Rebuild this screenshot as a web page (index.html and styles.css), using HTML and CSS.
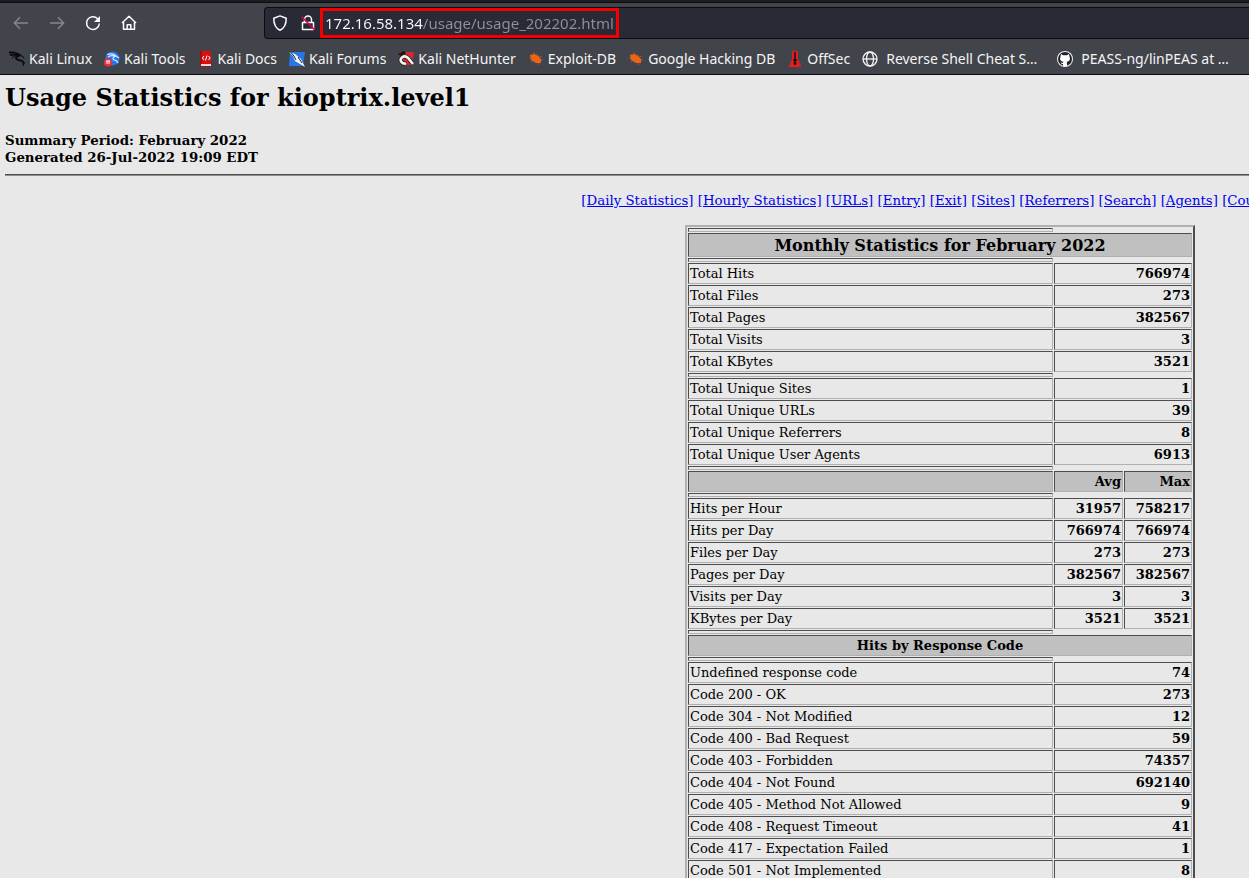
FILE: index.html
```html
<!DOCTYPE html>
<html lang="en">
<head>
<meta charset="utf-8">
<title>Usage Statistics for kioptrix.level1 - February 2022</title>
<link rel="stylesheet" href="styles.css">
</head>
<body>
<header class="browser">
  <div class="tabstrip"></div>
  <div class="toolbar">
    <nav class="controls" aria-label="Navigation">
      <button class="tool" aria-label="Back" disabled><svg width="16" height="16" viewBox="0 0 16 16"><path d="M15 8H1.5M7 2.2L1.3 8L7 13.8"/></svg></button>
      <button class="tool" aria-label="Forward" disabled><svg width="16" height="16" viewBox="0 0 16 16"><path d="M1 8h13.5M9 2.2L14.7 8L9 13.8"/></svg></button>
      <button class="tool" aria-label="Reload"><svg width="16" height="16" viewBox="0 0 16 16"><path d="M14.3 8.5A6.4 6.4 0 1 1 12.6 3.7"/><path class="solid" d="M15 1v6H9z"/></svg></button>
      <button class="tool" aria-label="Home"><svg width="16" height="16" viewBox="0 0 16 16"><path d="M1 8L8 1.2L15 8M2.5 7v7.2h11V7M6.2 14v-4.2h3.6V14"/></svg></button>
    </nav>
    <form class="urlbar">
      <svg class="shield" width="16" height="16" viewBox="0 0 16 16"><path d="M8 .9L14.2 3.2C14.3 8.5 13.2 12.7 8 15.2C2.8 12.7 1.7 8.5 1.8 3.2Z"/></svg>
      <svg class="lock" width="16" height="16" viewBox="0 0 16 16"><path d="M4.5 7V4.500a3.500 3.500 0 0 1 7 0V7M2.500 7.500h11v7h-11z"/><path class="strike" d="M1.500 1.500L14.800 15"/></svg>
      <input class="address" type="text" aria-label="Address" value="172.16.58.134/usage/usage_202202.html">
    </form>
  </div>
  <nav class="bookmarks" aria-label="Bookmarks">
    <a class="bookmark" href="#"><svg width="16" height="16" viewBox="0 0 16 16" fill="none" stroke="#08090b"><path stroke-width="1.8" d="M0 1.5Q6 .8 9 3L11.5 4M1 4Q7 3 9.5 5Q6 6 7.5 8Q9 9.5 12 9.5Q15 10.5 14.5 12.5"/><path d="M10 4l4 1.5l1 2M3 7Q6 4 9 5M14 12l.5 3M12.5 10.5L16 12"/></svg>Kali Linux</a>
    <a class="bookmark" href="#"><svg width="16" height="16" viewBox="0 0 16 16"><circle cx="8.5" cy="7.5" r="7" fill="#2777f3"/><path d="M3 3.5Q9 1.500 12 5L15 7M4 6Q8 3.500 11 5.500Q7.500 7 10 9Q13 9 14 12" fill="none" stroke="#d9ebff" stroke-width="1.2"/><circle cx="4" cy="11.500" r="4" fill="#ed3030"/><path d="M2 10h4M3 10v3M5 10v3" stroke="#fff" fill="none"/></svg>Kali Tools</a>
    <a class="bookmark" href="#"><svg width="16" height="16" viewBox="0 0 16 16"><path d="M2 0h11v13H2z" fill="#d8100e"/><path d="M2 0h2v15H2z" fill="#a80c0c"/><path d="M3 13h10v2H3z" fill="#ddd"/><path d="M2 15h11v1H2z" fill="#b50c0c"/><path d="M6 5L4.300 7L6 9M10.500 5L12.200 7L10.500 9M9 4.500L7.500 9.500" fill="none" stroke="#fff"/></svg>Kali Docs</a>
    <a class="bookmark" href="#"><svg width="16" height="16" viewBox="0 0 16 16"><path d="M1 1h15l-2 14H0z" fill="#2777e8"/><path d="M0 1L6 3L12 8L15 14L16 16L11 13L6 10L4 5Z" fill="#f5f5f5"/><path d="M1 .5L5 5L7 9M9 6L13 12" fill="none" stroke="#20242b"/></svg>Kali Forums</a>
    <a class="bookmark" href="#"><svg width="16" height="16" viewBox="0 0 16 16"><path d="M2 1h14l-2 13H4z" fill="#d92732"/><path d="M0 3L6 0L8 2L3 5Z" fill="#151515"/><path d="M8 13L4.500 12Q1 9 4 6.500Q7 4 10 7L15 13" fill="none" stroke="#222" stroke-width="4.200"/><path d="M8 13L4.500 12Q1 9 4 6.500Q7 4 10 7L15 13" fill="none" stroke="#f3f3f3" stroke-width="2.600"/></svg>Kali NetHunter</a>
    <a class="bookmark" href="#"><svg width="16" height="16" viewBox="0 0 16 16"><path d="M2 4L6 3L10 5L13 8L13 12L8 12L3 9Z" fill="#ed6416"/><path d="M1 7h4M3 11l4-3M6 1l1 4M9 3l1 4M11 5l3 1M11 9l4 0M9 10l2 4" fill="none" stroke="#ed6416" stroke-opacity=".5"/></svg>Exploit-DB</a>
    <a class="bookmark" href="#"><svg width="16" height="16" viewBox="0 0 16 16"><path d="M2 4L6 3L10 5L13 8L13 12L8 12L3 9Z" fill="#ed6416"/><path d="M1 7h4M3 11l4-3M6 1l1 4M9 3l1 4M11 5l3 1M11 9l4 0M9 10l2 4" fill="none" stroke="#ed6416" stroke-opacity=".5"/></svg>Google Hacking DB</a>
    <a class="bookmark" href="#"><svg width="16" height="16" viewBox="0 0 16 16"><path d="M5 0h6v8L14.500 16H1.500L5 8Z" fill="#dc2024"/><path d="M8 1v13M6 9h4M6.500 12h3" fill="none" stroke="#260d10" stroke-width="1.600"/></svg>OffSec</a>
    <a class="bookmark wide" href="#"><svg width="16" height="16" viewBox="0 0 16 16" fill="none" stroke="#f4f4f5" stroke-width="1.300"><circle cx="8" cy="8" r="7"/><ellipse cx="8" cy="8" rx="3.500" ry="7"/><path d="M1 8h14"/></svg>Reverse Shell Cheat S…</a>
    <a class="bookmark wide" href="#"><svg width="16" height="16" viewBox="0 0 16 16"><circle cx="8" cy="8" r="8" fill="#f4f4f4"/><circle cx="8" cy="8" r="7" fill="#202328"/><path d="M4 3l2 1.200h4L12 3l.5 2.500Q14 10.500 9.800 10.800L10.200 15H6v-2Q4 13 3.500 11.500L6 12L6.300 10.800Q2 10.500 3.500 5.500Z" fill="#fff"/></svg>PEASS-ng/linPEAS at …</a>
  </nav>
</header>
<main class="report">
  <h1 class="title">Usage Statistics for kioptrix.level1</h1>
  <p class="period"><small>Summary Period: February 2022<br>Generated 26-Jul-2022 19:09 EDT</small></p>
  <hr class="rule">
  <nav class="sections" aria-label="Sections"><small>
    <a href="#daily">[Daily Statistics]</a>
    <a href="#hourly">[Hourly Statistics]</a>
    <a href="#urls">[URLs]</a>
    <a href="#entry">[Entry]</a>
    <a href="#exit">[Exit]</a>
    <a href="#sites">[Sites]</a>
    <a href="#referrers">[Referrers]</a>
    <a href="#search">[Search]</a>
    <a href="#agents">[Agents]</a>
    <a href="#countries">[Countries]</a>
  </small></nav>
  <table class="stats">
    <colgroup><col class="label-col"><col class="avg-col"><col class="max-col"></colgroup>
    <tbody>
    <tr class="gap"><th></th></tr>
    <tr><th class="heading main-heading" colspan="3">Monthly Statistics for February 2022</th></tr>
    <tr class="gap"><th></th></tr>
    <tr><td>Total Hits</td><td class="num" colspan="2">766974</td></tr>
    <tr><td>Total Files</td><td class="num" colspan="2">273</td></tr>
    <tr><td>Total Pages</td><td class="num" colspan="2">382567</td></tr>
    <tr><td>Total Visits</td><td class="num" colspan="2">3</td></tr>
    <tr><td>Total KBytes</td><td class="num" colspan="2">3521</td></tr>
    <tr class="gap"><th></th></tr>
    <tr><td>Total Unique Sites</td><td class="num" colspan="2">1</td></tr>
    <tr><td>Total Unique URLs</td><td class="num" colspan="2">39</td></tr>
    <tr><td>Total Unique Referrers</td><td class="num" colspan="2">8</td></tr>
    <tr><td>Total Unique User Agents</td><td class="num" colspan="2">6913</td></tr>
    <tr class="gap"><th></th></tr>
    <tr><th class="heading"></th><th class="heading num">Avg</th><th class="heading num">Max</th></tr>
    <tr class="gap"><th></th></tr>
    <tr><td>Hits per Hour</td><td class="num">31957</td><td class="num">758217</td></tr>
    <tr><td>Hits per Day</td><td class="num">766974</td><td class="num">766974</td></tr>
    <tr><td>Files per Day</td><td class="num">273</td><td class="num">273</td></tr>
    <tr><td>Pages per Day</td><td class="num">382567</td><td class="num">382567</td></tr>
    <tr><td>Visits per Day</td><td class="num">3</td><td class="num">3</td></tr>
    <tr><td>KBytes per Day</td><td class="num">3521</td><td class="num">3521</td></tr>
    <tr class="gap"><th></th></tr>
    <tr><th class="heading" colspan="3">Hits by Response Code</th></tr>
    <tr class="gap"><th></th></tr>
    <tr><td>Undefined response code</td><td class="num" colspan="2">74</td></tr>
    <tr><td>Code 200 - OK</td><td class="num" colspan="2">273</td></tr>
    <tr><td>Code 304 - Not Modified</td><td class="num" colspan="2">12</td></tr>
    <tr><td>Code 400 - Bad Request</td><td class="num" colspan="2">59</td></tr>
    <tr><td>Code 403 - Forbidden</td><td class="num" colspan="2">74357</td></tr>
    <tr><td>Code 404 - Not Found</td><td class="num" colspan="2">692140</td></tr>
    <tr><td>Code 405 - Method Not Allowed</td><td class="num" colspan="2">9</td></tr>
    <tr><td>Code 408 - Request Timeout</td><td class="num" colspan="2">41</td></tr>
    <tr><td>Code 417 - Expectation Failed</td><td class="num" colspan="2">1</td></tr>
    <tr><td>Code 501 - Not Implemented</td><td class="num" colspan="2">8</td></tr>
    </tbody>
  </table>
</main>
</body>
</html>
```
FILE: styles.css
```css
* { box-sizing: border-box; }

body {
  margin: 0;
  height: 100vh;
  overflow: hidden;
  background: #e8e8e8;
  color: #000;
  font: 16px/17px "DejaVu Serif", serif;
}

/* Browser chrome */
.browser {
  background: #42444b;
  border-bottom: 1px solid #0c0c0f;
  font-family: "Noto Sans", sans-serif;
}
.tabstrip {
  height: 3px;
  background: #1c1d21;
  border-bottom: 1px solid #0c0c0f;
}
.toolbar {
  display: flex;
  align-items: center;
  padding-top: 4px;
}
.controls {
  display: flex;
  gap: 4px;
  padding-left: 5px;
  width: 264px;
  flex: none;
}
.tool {
  width: 32px;
  height: 32px;
  padding: 8px;
  border: 0;
  background: none;
}
.tool svg, .urlbar svg { display: block; }
.tool path, .urlbar path {
  fill: none;
  stroke: #fbfbfe;
  stroke-width: 1.5;
  stroke-linejoin: round;
}
.tool:disabled path { stroke: #85868b; }
.tool .solid { fill: #fbfbfe; stroke: none; }
.urlbar {
  flex: 1;
  display: flex;
  align-items: center;
  height: 32px;
  padding-left: 7px;
  background: #282a36;
  border: 1px solid #0c0c0f;
  border-right: 0;
  border-radius: 4px 0 0 4px;
}
.shield { margin-right: 12px; }
.lock { margin-right: 4px; }
.urlbar .strike { stroke: #e2003b; }
.address {
  width: 299px;
  height: 30px;
  padding: 0 0 0 5px;
  border: 0;
  outline: 3px solid #f50000;
  outline-offset: -3px;
  background: linear-gradient(to right, #fbfbfe 103px, #8f9098 103px) text;
  color: transparent;
  font: 15px/20px "Noto Sans", sans-serif;
}
.bookmarks {
  display: flex;
  gap: 12px;
  height: 35px;
  padding: 5px 9px 0;
  align-items: center;
  overflow: hidden;
}
.bookmark {
  display: flex;
  flex: none;
  align-items: center;
  gap: 4px;
  color: #f4f4f5;
  font-size: 14px;
  line-height: 20px;
  text-decoration: none;
  white-space: nowrap;
}
.bookmark.wide { gap: 8px; }
.bookmark.wide + .wide { margin-left: 8px; }

/* Report */
.report {
  min-width: 1880px;
  padding: 9px 5px;
}
.title {
  margin: 0 0 20px;
  font-size: 24px;
  line-height: 28px;
}
.period {
  margin: 0 0 8px;
  font-weight: bold;
}
.period small, .sections small { display: block; }
.rule {
  height: 2px;
  margin: 0 0 16px;
  border: 0;
  border-top: 1px solid #4d4f4d;
  background: #8c8e8c;
}
.sections {
  margin-bottom: 16px;
  text-align: center;
}
.sections a { color: #0000ee; }
.stats {
  width: 510px;
  margin: 0 auto;
  table-layout: fixed;
  border: 2px solid;
  border-color: #b0b0b0 #4d4d4d #4d4d4d #b0b0b0;
  border-spacing: 1px;
  font-size: 13px;
}
.label-col { width: 365px; }
.avg-col { width: 69px; }
.max-col { width: 68px; }
.stats td, .stats th {
  height: 21px;
  padding: 1px;
  border: 1px solid;
  border-color: #4d4d4d #b0b0b0 #b0b0b0 #4d4d4d;
}
.stats .gap th { height: 4px; }
.stats .heading { background: #c0c0c0; }
.stats .main-heading {
  padding: 2px 1px 0;
  font-size: 16px;
  line-height: 20px;
}
.stats .num {
  text-align: right;
  font-weight: bold;
}
```
